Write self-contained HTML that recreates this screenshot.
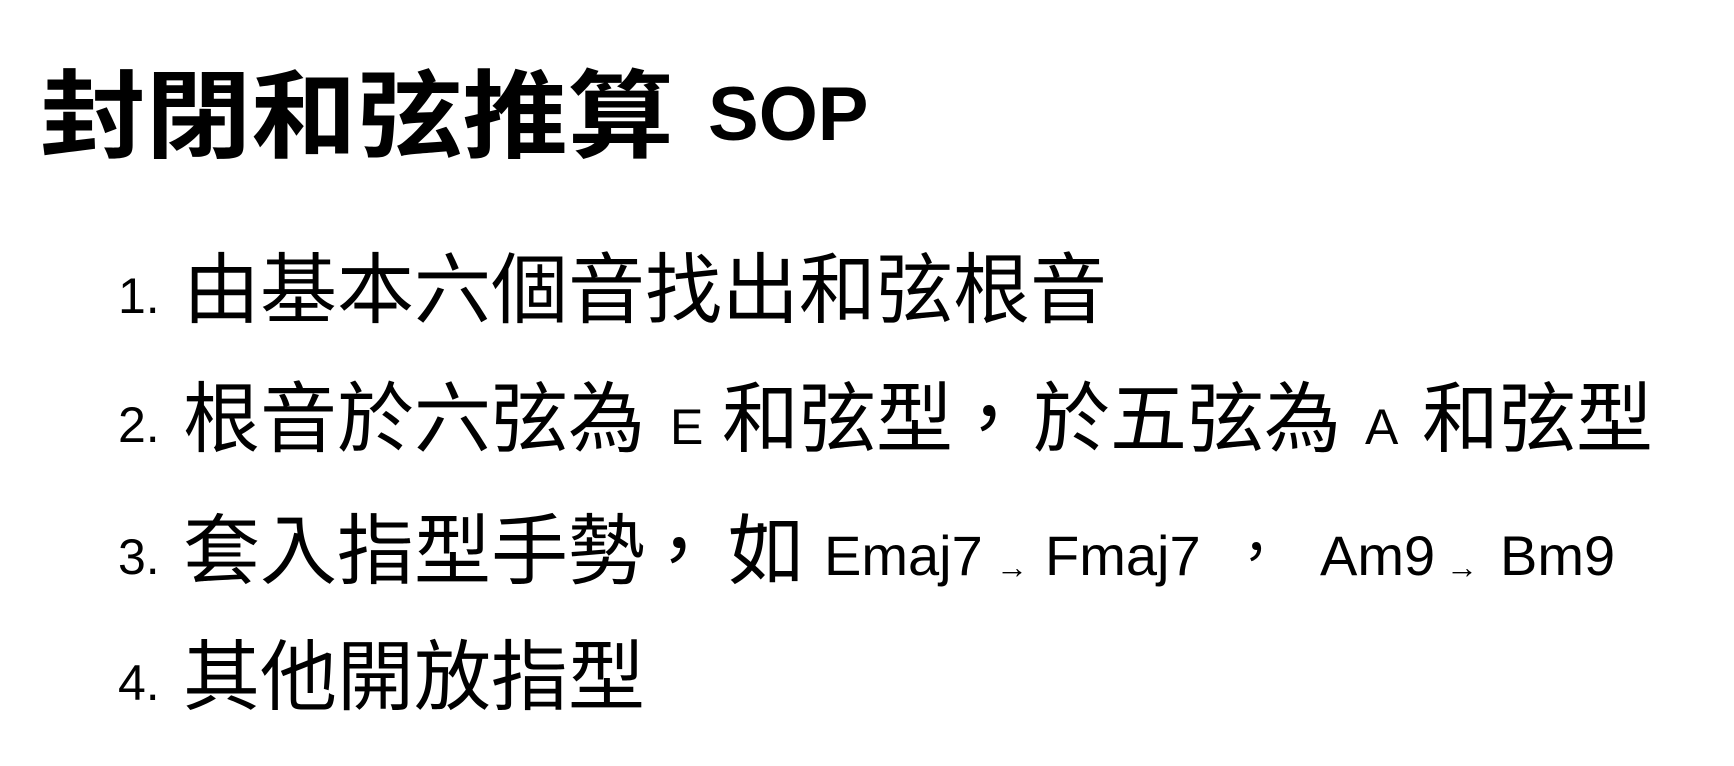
<!DOCTYPE html>
<html><head><meta charset="utf-8"><style>
body{margin:0;width:1734px;height:766px;background:#fff;overflow:hidden;position:relative;font-family:"Liberation Sans","Noto Sans CJK TC",sans-serif;color:#000}
span{position:absolute;white-space:nowrap;line-height:100px;height:100px}
.t{font-weight:bold;font-size:96px;line-height:120px;height:120px;transform:scaleX(1.1);transform-origin:0 0}
.n{font-size:50px}
.c{font-size:77px;font-weight:400}
.l{font-size:50px}
.m{font-size:56px}
.a{font-size:32px}
</style></head><body>
<span class="t" style="left:40px;top:58px">封閉和弦推算</span>
<span class="t" style="left:708px;top:55px;font-size:76px;transform:none">SOP</span>

<span class="n" style="left:118px;top:246px">1.</span>
<span class="c" style="left:183px;top:241px">由基本六個音找出和弦根音</span>

<span class="n" style="left:118px;top:375px">2.</span>
<span class="c" style="left:183px;top:370px">根音於六弦為</span>
<span class="l" style="left:670px;top:377px">E</span>
<span class="c" style="left:722px;top:370px">和弦型</span>
<span class="c" style="left:950px;top:370px">，</span>
<span class="c" style="left:1033px;top:370px">於五弦為</span>
<span class="l" style="left:1365px;top:377px">A</span>
<span class="c" style="left:1422px;top:370px">和弦型</span>

<span class="n" style="left:118px;top:507px">3.</span>
<span class="c" style="left:183px;top:502px">套入指型手勢</span>
<span class="c" style="left:640px;top:502px">，</span>
<span class="c" style="left:728px;top:502px">如</span>
<span class="m" style="left:824px;top:506px">Emaj7</span>
<span class="a" style="left:996px;top:517px">→</span>
<span class="m" style="left:1045px;top:506px">Fmaj7</span>
<span class="m" style="left:1228px;top:503px">，</span>
<span class="m" style="left:1320px;top:506px">Am9</span>
<span class="a" style="left:1446px;top:517px">→</span>
<span class="m" style="left:1500px;top:506px">Bm9</span>

<span class="n" style="left:118px;top:633px">4.</span>
<span class="c" style="left:183px;top:628px">其他開放指型</span>
</body></html>
